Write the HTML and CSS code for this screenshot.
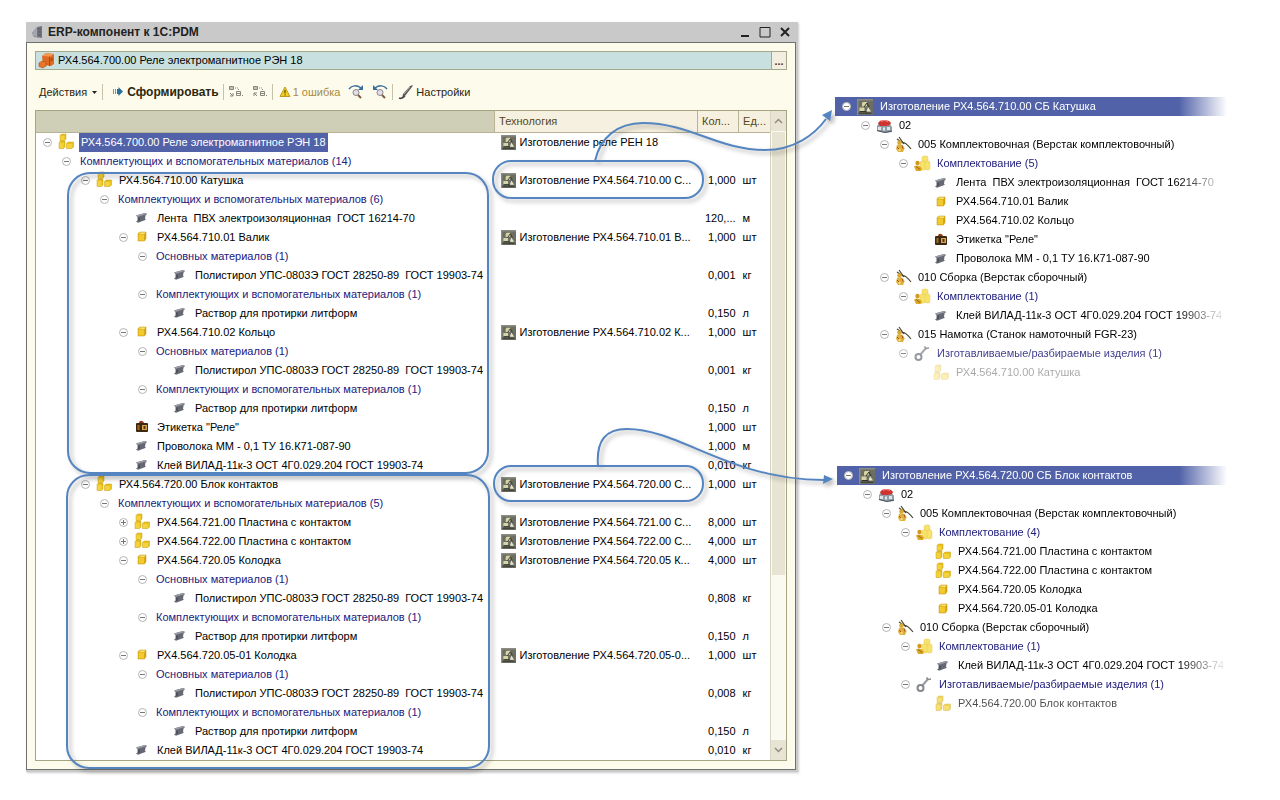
FILE: index.html
```html
<!DOCTYPE html>
<html lang="ru">
<head>
  <meta charset="UTF-8" />
  <meta name="viewport" content="width=device-width, initial-scale=1.0" />
  <title>ERP-компонент к 1С:PDM</title>
  <link rel="stylesheet" href="styles.css">
</head>
<body>
  <!-- Icon set -->
  <svg class="sprite" width="0" height="0" aria-hidden="true">
    <symbol id="minus" viewBox="0 0 9 9"><circle cx="4.500" cy="4.500" r="4" fill="#fff" stroke="#b4b4b4"/><path d="M2 4.500h5" stroke="#777"/></symbol>
    <symbol id="plus" viewBox="0 0 9 9"><circle cx="4.500" cy="4.500" r="4" fill="#fff" stroke="#b4b4b4"/><path d="M2 4.500h5M4.500 2v5" stroke="#777"/></symbol>
    <symbol id="asm" viewBox="0 0 18 18">
      <g fill="#e8c01f" stroke="#c9a014" stroke-width=".5"><path d="M3 2.500L4.500 1H9v5L7.500 7.500H3z"/><path d="M2 9.500L3.500 8H8v6l-1.500 1.500H2z"/><path d="M9.500 10.500L11 9h5.500v5L15 15.500H9.500z"/></g>
      <path d="M3.500 3h4v4h-4zM2.500 10h4v5h-4zM10 11h5v4h-5z" fill="#f3d23a"/>
    </symbol>
    <symbol id="part" viewBox="0 0 18 18"><path d="M5 5.500L7 4h6v6.500L11.500 13H5z" fill="#d9a915" stroke="#c1960f" stroke-width=".5"/><path d="M5.500 5.500L7.200 4.400h5.300L11.200 6z" fill="#fbeb85"/><path d="M5.500 6.500h5.500v6H5.500z" fill="#f2ca2e"/></symbol>
    <symbol id="bar" viewBox="0 0 18 18"><path d="M3 6.500l9-2.500 2 1-1.500 1.500-.5 3.500 1 .7-8 3-2-1.200 1.500-1V8z" fill="#666873"/><path d="M3 6.500l9-2.500 2 1-9 2.700z" fill="#9a9ca6"/><path d="M6 8.500v3.500" stroke="#383a45"/></symbol>
    <symbol id="label" viewBox="0 0 18 18"><rect x="3" y="5" width="12" height="9" rx="1" fill="#3d2812"/><path d="M6 5c0-3 4-3 5 0z" fill="#94391b"/><rect x="9" y="7" width="5" height="5" fill="#d9a653"/><rect x="4.500" y="7" width="2" height="5" fill="#9a6c28"/><path d="M10.500 8h2v3h-2z" fill="#5b3512"/></symbol>
    <symbol id="tech" viewBox="0 0 16 16"><rect width="16" height="16" fill="#6c6e63"/><path d="M0 0h16v1.500H0zM0 0h1.500v16H0z" fill="#8b8d83"/><path d="M5 4l1-1h4v3.500L9 7.500H5zM2.500 8.500h5v3.500h-5z" fill="#d6d4a4"/><path d="M9.500 12.500L11 8l3 4.500z" fill="#e9e7c9"/><path d="M7 8l3-4 2 4M3 12.500h6l1 1.500" stroke="#31332a" fill="none"/><path d="M1.500 13.500h13V15h-13z" fill="#44463c"/></symbol>
    <symbol id="shop" viewBox="0 0 18 18"><path d="M2 9l3-4 9 1 3 4v5l-7 1-8-2z" fill="#8f9da8"/><path d="M3 6.500C4 2 14 2 16 6l-1 2-4 1H5z" fill="#cf3430"/><path d="M6 4.500c2-1.500 5-1 7 0" stroke="#f2948b" fill="none"/><path d="M3 10h3v3H3zM8 10.500h2v3H8zM12 10h3v3h-3z" fill="#dfe6e6"/><path d="M2 13.500l8 2 7-1.500" stroke="#4a5459" fill="none"/></symbol>
    <symbol id="op" viewBox="0 0 18 18"><path d="M5 1l5 7M3 3l6 4M8 6c3 0 5 2 9 7" stroke="#4c4630" stroke-width="1.200" fill="none"/><circle cx="5.500" cy="6.500" r="2.300" fill="#d8a935"/><path d="M3 9c3-2 7 0 7.500 3.500L9 16H4l-2-3z" fill="#dfb03a"/><path d="M3 11l3 3M8 9.500l1 3" stroke="#a8501f"/><circle cx="5.500" cy="14" r="1.200" fill="#f3dc82"/></symbol>
    <symbol id="kit" viewBox="0 0 18 18"><g fill="#f7e26c" stroke="#e6c94c" stroke-width=".5"><rect x="9" y="1" width="6" height="6" rx="2"/><rect x="7" y="6" width="5.500" height="9" rx="2"/><rect x="12" y="6" width="5" height="9" rx="2"/></g><circle cx="4.500" cy="8" r="2.200" fill="#d29a20"/><path d="M1 11.500c3-2 6-1 8 2L8 16H3z" fill="#dca924"/><path d="M3 11.500l4 3" stroke="#a3661a"/></symbol>
    <symbol id="tool" viewBox="0 0 18 18"><path d="M7 10l6-7" stroke="#989ba0" stroke-width="2"/><circle cx="5.500" cy="12" r="3" fill="none" stroke="#85888d" stroke-width="2"/><path d="M11.500 1.500l1.500 2 3-.5" stroke="#85888d" fill="none" stroke-width="1.500"/></symbol>
  </svg>

  <div class="page">
    <main class="window">
      <header class="titlebar">
        <svg class="title-icon" viewBox="0 0 12 14"><path d="M1 8l5-6 5-1v12l-8-1z" fill="#74767f"/><path d="M1 8l5-6v10l-4-1z" fill="#a3a5b0"/><path d="M7 4h3M7 7h3M7 10h3" stroke="#55575f"/></svg>
        <h1>ERP-компонент к 1С:PDM</h1>
        <button class="win-btn" aria-label="Свернуть"><svg viewBox="0 0 12 12"><path d="M2 10h8" stroke="#222" stroke-width="2"/></svg></button>
        <button class="win-btn" aria-label="Развернуть"><svg viewBox="0 0 12 12"><path d="M1 1.500h10v9.500H1z" fill="none" stroke="#222"/></svg></button>
        <button class="win-btn" aria-label="Закрыть"><svg viewBox="0 0 12 12"><path d="M2 2l8 8M10 2l-8 8" stroke="#222" stroke-width="2"/></svg></button>
      </header>

      <div class="window-body">
        <div class="picker">
          <svg class="icon" viewBox="0 0 18 18"><path d="M4 4l4-3 8 1v10l-3 2-8-1z" fill="#e06a22"/><path d="M4 4l4-3 8 1-4 2.500z" fill="#f49a56"/><path d="M11.500 5v9" stroke="#a3460f"/><path d="M12.500 6.500l2.500-1v3l-2.500 1z" fill="#b84b10"/><path d="M1 11l3-2 4 1v4l-3 2-4-1.500z" fill="#e7752c" stroke="#b34b13" stroke-width=".6"/></svg>
          <input type="text" aria-label="Изделие" value="РХ4.564.700.00 Реле электромагнитное РЭН 18">
          <button aria-label="Выбрать">...</button>
        </div>

        <div class="toolbar">
          <button class="actions">Действия <svg width="5" height="3" viewBox="0 0 5 3"><path d="M0 0h5L2.500 3z" fill="#222"/></svg></button>
          <span class="sep"></span>
          <button class="run"><svg width="12" height="12" viewBox="0 0 12 12"><path d="M1.500 3v5M3.500 3v5" stroke="#5b9cc4"/><path d="M5 3h1.500V1L11 5.500 6.500 10V8H5z" fill="#2a6f9e"/></svg>Сформировать</button>
          <span class="sep"></span>
          <button class="tool" aria-label="Развернуть дерево"><svg width="16" height="16" viewBox="0 0 16 16"><g fill="none" stroke="#85877d"><path d="M1.500 2.500h4v3h-4zM8.500 7.500h4v4h-4zM8 9.500h5M1 4h5"/><path d="M7 4h1M9 4h1M10.500 5v1M14 11.500h1"/><path d="M2 9l3 3M5 9v3H2"/></g></svg></button>
          <button class="tool" aria-label="Свернуть дерево"><svg width="16" height="16" viewBox="0 0 16 16"><g fill="none" stroke="#85877d"><path d="M1.500 2.500h4v3h-4zM8.500 7.500h4v4h-4zM8 9.500h5M1 4h5"/><path d="M7 4h1M9 4h1M10.500 5v1M14 11.500h1"/><path d="M5 12L2 9M2 12V9h3"/></g></svg></button>
          <span class="sep"></span>
          <button class="warn"><svg width="12" height="12" viewBox="0 0 12 12"><path d="M6 1l5 9.500H1z" fill="#f3cb21" stroke="#c09a20"/><path d="M6 4v3.500M6 8.500v1" stroke="#39300a"/></svg>1 ошибка</button>
          <button class="tool" aria-label="Следующая ошибка"><svg width="16" height="16" viewBox="0 0 16 16"><path d="M1 5c3-4 8-4 12-1" fill="none" stroke="#386e9c" stroke-width="1.500"/><path d="M15 1v5h-5z" fill="#386e9c"/><circle cx="8" cy="8.500" r="3" fill="#e4dfe6" stroke="#8c8790"/><path d="M10 11l3 3" stroke="#805c3b" stroke-width="2"/></svg></button>
          <button class="tool" aria-label="Предыдущая ошибка"><svg width="16" height="16" viewBox="0 0 16 16"><path d="M15 5c-3-4-8-4-12-1" fill="none" stroke="#386e9c" stroke-width="1.500"/><path d="M1 1v5h5z" fill="#386e9c"/><circle cx="8" cy="8.500" r="3" fill="#e4dfe6" stroke="#8c8790"/><path d="M10 11l3 3" stroke="#805c3b" stroke-width="2"/></svg></button>
          <span class="sep"></span>
          <button class="settings"><svg width="16" height="16" viewBox="0 0 16 16"><path d="M4 14l1-4 7-8 3-1-1 2-7 9z" fill="#5a5b60"/><path d="M1 14c2 1 4 0 6-2" fill="none" stroke="#444" stroke-width="1.500"/><path d="M6 10l6-7" stroke="#aaa"/></svg>Настройки</button>
        </div>

        <div class="grid">
          <table>
            <colgroup><col><col class="col-tech"><col class="col-qty"><col class="col-unit"></colgroup>
            <thead>
              <tr><th class="th-tree" aria-label="Изделие"></th><th>Технология</th><th>Кол...</th><th>Ед...</th></tr>
            </thead>
            <tbody>
              <tr><td><div class="node l0"><button class="tg"><svg><use href="#minus"/></svg></button><svg class="icon"><use href="#asm"/></svg><span class="selected">РХ4.564.700.00 Реле электромагнитное РЭН 18</span></div></td><td><div class="tech"><svg><use href="#tech"/></svg>Изготовление реле РЕН 18</div></td><td></td><td></td></tr>
              <tr><td><div class="node l1 group"><button class="tg"><svg><use href="#minus"/></svg></button><span>Комплектующих и вспомогательных материалов (14)</span></div></td><td></td><td></td><td></td></tr>
              <tr><td><div class="node l2"><button class="tg"><svg><use href="#minus"/></svg></button><svg class="icon"><use href="#asm"/></svg><span>РХ4.564.710.00 Катушка</span></div></td><td><div class="tech"><svg><use href="#tech"/></svg>Изготовление РХ4.564.710.00 С...</div></td><td>1,000</td><td>шт</td></tr>
              <tr><td><div class="node l3 group"><button class="tg"><svg><use href="#minus"/></svg></button><span>Комплектующих и вспомогательных материалов (6)</span></div></td><td></td><td></td><td></td></tr>
              <tr><td><div class="node l4 leaf"><svg class="icon"><use href="#bar"/></svg><span>Лента&nbsp; ПВХ электроизоляционная&nbsp; ГОСТ 16214-70</span></div></td><td></td><td>120,...</td><td>м</td></tr>
              <tr><td><div class="node l4"><button class="tg"><svg><use href="#minus"/></svg></button><svg class="icon"><use href="#part"/></svg><span>РХ4.564.710.01 Валик</span></div></td><td><div class="tech"><svg><use href="#tech"/></svg>Изготовление РХ4.564.710.01 В...</div></td><td>1,000</td><td>шт</td></tr>
              <tr><td><div class="node l5 group"><button class="tg"><svg><use href="#minus"/></svg></button><span>Основных материалов (1)</span></div></td><td></td><td></td><td></td></tr>
              <tr><td><div class="node l6 leaf"><svg class="icon"><use href="#bar"/></svg><span>Полистирол УПС-0803Э ГОСТ 28250-89&nbsp; ГОСТ 19903-74</span></div></td><td></td><td>0,001</td><td>кг</td></tr>
              <tr><td><div class="node l5 group"><button class="tg"><svg><use href="#minus"/></svg></button><span>Комплектующих и вспомогательных материалов (1)</span></div></td><td></td><td></td><td></td></tr>
              <tr><td><div class="node l6 leaf"><svg class="icon"><use href="#bar"/></svg><span>Раствор для протирки литформ</span></div></td><td></td><td>0,150</td><td>л</td></tr>
              <tr><td><div class="node l4"><button class="tg"><svg><use href="#minus"/></svg></button><svg class="icon"><use href="#part"/></svg><span>РХ4.564.710.02 Кольцо</span></div></td><td><div class="tech"><svg><use href="#tech"/></svg>Изготовление РХ4.564.710.02 К...</div></td><td>1,000</td><td>шт</td></tr>
              <tr><td><div class="node l5 group"><button class="tg"><svg><use href="#minus"/></svg></button><span>Основных материалов (1)</span></div></td><td></td><td></td><td></td></tr>
              <tr><td><div class="node l6 leaf"><svg class="icon"><use href="#bar"/></svg><span>Полистирол УПС-0803Э ГОСТ 28250-89&nbsp; ГОСТ 19903-74</span></div></td><td></td><td>0,001</td><td>кг</td></tr>
              <tr><td><div class="node l5 group"><button class="tg"><svg><use href="#minus"/></svg></button><span>Комплектующих и вспомогательных материалов (1)</span></div></td><td></td><td></td><td></td></tr>
              <tr><td><div class="node l6 leaf"><svg class="icon"><use href="#bar"/></svg><span>Раствор для протирки литформ</span></div></td><td></td><td>0,150</td><td>л</td></tr>
              <tr><td><div class="node l4 leaf"><svg class="icon"><use href="#label"/></svg><span>Этикетка "Реле"</span></div></td><td></td><td>1,000</td><td>шт</td></tr>
              <tr><td><div class="node l4 leaf"><svg class="icon"><use href="#bar"/></svg><span>Проволока ММ - 0,1 ТУ 16.К71-087-90</span></div></td><td></td><td>1,000</td><td>м</td></tr>
              <tr><td><div class="node l4 leaf"><svg class="icon"><use href="#bar"/></svg><span>Клей ВИЛАД-11к-3 ОСТ 4Г0.029.204 ГОСТ 19903-74</span></div></td><td></td><td>0,010</td><td>кг</td></tr>
              <tr><td><div class="node l2"><button class="tg"><svg><use href="#minus"/></svg></button><svg class="icon"><use href="#asm"/></svg><span>РХ4.564.720.00 Блок контактов</span></div></td><td><div class="tech"><svg><use href="#tech"/></svg>Изготовление РХ4.564.720.00 С...</div></td><td>1,000</td><td>шт</td></tr>
              <tr><td><div class="node l3 group"><button class="tg"><svg><use href="#minus"/></svg></button><span>Комплектующих и вспомогательных материалов (5)</span></div></td><td></td><td></td><td></td></tr>
              <tr><td><div class="node l4"><button class="tg"><svg><use href="#plus"/></svg></button><svg class="icon"><use href="#asm"/></svg><span>РХ4.564.721.00 Пластина с контактом</span></div></td><td><div class="tech"><svg><use href="#tech"/></svg>Изготовление РХ4.564.721.00 С...</div></td><td>8,000</td><td>шт</td></tr>
              <tr><td><div class="node l4"><button class="tg"><svg><use href="#plus"/></svg></button><svg class="icon"><use href="#asm"/></svg><span>РХ4.564.722.00 Пластина с контактом</span></div></td><td><div class="tech"><svg><use href="#tech"/></svg>Изготовление РХ4.564.722.00 С...</div></td><td>4,000</td><td>шт</td></tr>
              <tr><td><div class="node l4"><button class="tg"><svg><use href="#minus"/></svg></button><svg class="icon"><use href="#part"/></svg><span>РХ4.564.720.05 Колодка</span></div></td><td><div class="tech"><svg><use href="#tech"/></svg>Изготовление РХ4.564.720.05 К...</div></td><td>4,000</td><td>шт</td></tr>
              <tr><td><div class="node l5 group"><button class="tg"><svg><use href="#minus"/></svg></button><span>Основных материалов (1)</span></div></td><td></td><td></td><td></td></tr>
              <tr><td><div class="node l6 leaf"><svg class="icon"><use href="#bar"/></svg><span>Полистирол УПС-0803Э ГОСТ 28250-89&nbsp; ГОСТ 19903-74</span></div></td><td></td><td>0,808</td><td>кг</td></tr>
              <tr><td><div class="node l5 group"><button class="tg"><svg><use href="#minus"/></svg></button><span>Комплектующих и вспомогательных материалов (1)</span></div></td><td></td><td></td><td></td></tr>
              <tr><td><div class="node l6 leaf"><svg class="icon"><use href="#bar"/></svg><span>Раствор для протирки литформ</span></div></td><td></td><td>0,150</td><td>л</td></tr>
              <tr><td><div class="node l4"><button class="tg"><svg><use href="#minus"/></svg></button><svg class="icon"><use href="#part"/></svg><span>РХ4.564.720.05-01 Колодка</span></div></td><td><div class="tech"><svg><use href="#tech"/></svg>Изготовление РХ4.564.720.05-0...</div></td><td>1,000</td><td>шт</td></tr>
              <tr><td><div class="node l5 group"><button class="tg"><svg><use href="#minus"/></svg></button><span>Основных материалов (1)</span></div></td><td></td><td></td><td></td></tr>
              <tr><td><div class="node l6 leaf"><svg class="icon"><use href="#bar"/></svg><span>Полистирол УПС-0803Э ГОСТ 28250-89&nbsp; ГОСТ 19903-74</span></div></td><td></td><td>0,008</td><td>кг</td></tr>
              <tr><td><div class="node l5 group"><button class="tg"><svg><use href="#minus"/></svg></button><span>Комплектующих и вспомогательных материалов (1)</span></div></td><td></td><td></td><td></td></tr>
              <tr><td><div class="node l6 leaf"><svg class="icon"><use href="#bar"/></svg><span>Раствор для протирки литформ</span></div></td><td></td><td>0,150</td><td>л</td></tr>
              <tr><td><div class="node l4 leaf"><svg class="icon"><use href="#bar"/></svg><span>Клей ВИЛАД-11к-3 ОСТ 4Г0.029.204 ГОСТ 19903-74</span></div></td><td></td><td>0,010</td><td>кг</td></tr>
            </tbody>
          </table>
          <div class="scrollbar">
            <button aria-label="Вверх"><svg viewBox="0 0 9 6"><path d="M1 5l3.500-3.500L8 5" fill="none" stroke="#8f8d80" stroke-width="1.500"/></svg></button>
            <div class="track"><div class="thumb"></div></div>
            <button aria-label="Вниз"><svg viewBox="0 0 9 6"><path d="M1 1l3.500 3.500L8 1" fill="none" stroke="#8f8d80" stroke-width="1.500"/></svg></button>
          </div>
        </div>
      </div>
    </main>

    <aside class="details">
      <ul class="panel">
        <li class="node l0 head"><button class="tg"><svg><use href="#minus"/></svg></button><svg class="icon"><use href="#tech"/></svg><span>Изготовление РХ4.564.710.00 СБ Катушка</span></li>
        <li class="node l1"><button class="tg"><svg><use href="#minus"/></svg></button><svg class="icon"><use href="#shop"/></svg><span>02</span></li>
        <li class="node l2"><button class="tg"><svg><use href="#minus"/></svg></button><svg class="icon"><use href="#op"/></svg><span>005 Комплектовочная (Верстак комплектовочный)</span></li>
        <li class="node l3 blue"><button class="tg"><svg><use href="#minus"/></svg></button><svg class="icon"><use href="#kit"/></svg><span>Комплектование (5)</span></li>
        <li class="node l4 leaf"><svg class="icon"><use href="#bar"/></svg><span>Лента&nbsp; ПВХ электроизоляционная&nbsp; ГОСТ 16214-70</span></li>
        <li class="node l4 leaf"><svg class="icon"><use href="#part"/></svg><span>РХ4.564.710.01 Валик</span></li>
        <li class="node l4 leaf"><svg class="icon"><use href="#part"/></svg><span>РХ4.564.710.02 Кольцо</span></li>
        <li class="node l4 leaf"><svg class="icon"><use href="#label"/></svg><span>Этикетка "Реле"</span></li>
        <li class="node l4 leaf"><svg class="icon"><use href="#bar"/></svg><span>Проволока ММ - 0,1 ТУ 16.К71-087-90</span></li>
        <li class="node l2"><button class="tg"><svg><use href="#minus"/></svg></button><svg class="icon"><use href="#op"/></svg><span>010 Сборка (Верстак сборочный)</span></li>
        <li class="node l3 blue"><button class="tg"><svg><use href="#minus"/></svg></button><svg class="icon"><use href="#kit"/></svg><span>Комплектование (1)</span></li>
        <li class="node l4 leaf"><svg class="icon"><use href="#bar"/></svg><span>Клей ВИЛАД-11к-3 ОСТ 4Г0.029.204 ГОСТ 19903-74</span></li>
        <li class="node l2"><button class="tg"><svg><use href="#minus"/></svg></button><svg class="icon"><use href="#op"/></svg><span>015 Намотка (Станок намоточный FGR-23)</span></li>
        <li class="node l3 blue fade-1"><button class="tg"><svg><use href="#minus"/></svg></button><svg class="icon"><use href="#tool"/></svg><span>Изготавливаемые/разбираемые изделия (1)</span></li>
        <li class="node l4 leaf fade-3"><svg class="icon"><use href="#asm"/></svg><span>РХ4.564.710.00 Катушка</span></li>
      </ul>
      <ul class="panel panel-second">
        <li class="node l0 head"><button class="tg"><svg><use href="#minus"/></svg></button><svg class="icon"><use href="#tech"/></svg><span>Изготовление РХ4.564.720.00 СБ Блок контактов</span></li>
        <li class="node l1"><button class="tg"><svg><use href="#minus"/></svg></button><svg class="icon"><use href="#shop"/></svg><span>02</span></li>
        <li class="node l2"><button class="tg"><svg><use href="#minus"/></svg></button><svg class="icon"><use href="#op"/></svg><span>005 Комплектовочная (Верстак комплектовочный)</span></li>
        <li class="node l3 blue"><button class="tg"><svg><use href="#minus"/></svg></button><svg class="icon"><use href="#kit"/></svg><span>Комплектование (4)</span></li>
        <li class="node l4 leaf"><svg class="icon"><use href="#asm"/></svg><span>РХ4.564.721.00 Пластина с контактом</span></li>
        <li class="node l4 leaf"><svg class="icon"><use href="#asm"/></svg><span>РХ4.564.722.00 Пластина с контактом</span></li>
        <li class="node l4 leaf"><svg class="icon"><use href="#part"/></svg><span>РХ4.564.720.05 Колодка</span></li>
        <li class="node l4 leaf"><svg class="icon"><use href="#part"/></svg><span>РХ4.564.720.05-01 Колодка</span></li>
        <li class="node l2"><button class="tg"><svg><use href="#minus"/></svg></button><svg class="icon"><use href="#op"/></svg><span>010 Сборка (Верстак сборочный)</span></li>
        <li class="node l3 blue"><button class="tg"><svg><use href="#minus"/></svg></button><svg class="icon"><use href="#kit"/></svg><span>Комплектование (1)</span></li>
        <li class="node l4 leaf"><svg class="icon"><use href="#bar"/></svg><span>Клей ВИЛАД-11к-3 ОСТ 4Г0.029.204 ГОСТ 19903-74</span></li>
        <li class="node l3 blue"><button class="tg"><svg><use href="#minus"/></svg></button><svg class="icon"><use href="#tool"/></svg><span>Изготавливаемые/разбираемые изделия (1)</span></li>
        <li class="node l4 leaf fade-2"><svg class="icon"><use href="#asm"/></svg><span>РХ4.564.720.00 Блок контактов</span></li>
      </ul>
    </aside>

    <!-- Frames and arrows drawn over the tree -->
    <svg class="callouts" width="1280" height="800" viewBox="0 0 1280 800" aria-hidden="true">
      <g fill="none" stroke="#5585c0" stroke-width="2">
        <rect x="68" y="173" width="420" height="300" rx="22"/>
        <rect x="67" y="475" width="422" height="293" rx="22"/>
        <rect x="493" y="161" width="210" height="37" rx="18"/>
        <rect x="494" y="466" width="209" height="35" rx="17"/>
        <path d="M595 161C600 138 617 123 643 123C690 123 718 150 765 150C795 150 815 134 826 119"/>
        <path d="M598 466C596 440 606 429 627 429C680 429 730 480 824 480"/>
      </g>
      <path d="M832 110l-2 11-8-6zM833 479l-10 5 1-9z" fill="#5585c0"/>
    </svg>
  </div>
</body>
</html>
```

FILE: styles.css
```css
* {
  margin: 0;
  padding: 0;
  box-sizing: border-box;
}

body {
  font-family: "Liberation Sans", Arial, sans-serif;
  font-size: 11px;
  line-height: 19px;
  color: #000;
  background-color: #fff;
}

button, input {
  font: inherit;
  color: inherit;
  background: none;
  border: none;
}

.sprite {
  position: absolute;
}

.page {
  position: relative;
  display: grid;
  grid-template-columns: minmax(0, 772fr) minmax(0, 400fr);
  gap: 37px;
  align-items: start;
  padding: 22px 45px 28px 26px;
}

/* Main window */
.window {
  background-color: #fcfbec;
  border: solid #c9c9c9;
  border-width: 0 2px 2px 0;
  box-shadow: 1px 1px 2px rgba(0, 0, 0, 0.2);
}

.titlebar {
  display: flex;
  align-items: center;
  gap: 8px;
  height: 20px;
  padding: 0 7px 0 5px;
  margin-right: -2px;
  background-color: #c9c9c9;
}

.title-icon {
  width: 12px;
  height: 14px;
  margin-right: -3px;
}

.titlebar h1 {
  flex: 1;
  font-size: 12px;
  font-weight: bold;
  color: #222;
}

.win-btn {
  display: flex;
  width: 12px;
  height: 12px;
}

.window-body {
  padding: 8px;
  border: 1px solid #707070;
}

.picker {
  display: flex;
  align-items: center;
  height: 19px;
  background-color: #c8e0df;
  border: 1px solid #a5a98c;
}

.picker .icon {
  margin: 0 2px;
}

.picker input {
  flex: 1;
  min-width: 0;
  height: 17px;
  outline: none;
}

.picker button {
  width: 15px;
  height: 17px;
  line-height: 14px;
  font-weight: bold;
  color: #5e301e;
  background-color: #f3eee0;
  border-left: 1px solid #a5a98c;
}

.toolbar {
  display: flex;
  align-items: center;
  height: 40px;
  padding: 4px 4px 0;
  color: #2d260e;
}

.toolbar button {
  display: flex;
  align-items: center;
  white-space: nowrap;
}

.sep {
  width: 1px;
  height: 16px;
  background-color: #c6c2ab;
}

.actions {
  gap: 5px;
  margin-right: 5px;
}

.run {
  gap: 3px;
  margin-left: 9px;
  margin-right: 4px;
  font-size: 12px;
  font-weight: bold;
}

.tool {
  width: 24px;
  justify-content: center;
}

.warn {
  gap: 2px;
  margin-left: 6px;
  margin-right: 4px;
  color: #a98a3c;
}

.settings {
  gap: 2px;
  margin-left: 5px;
}

/* Tree table */
.grid {
  display: flex;
  background-color: #fff;
  border: 1px solid #a5a582;
}

table {
  flex: 1;
  min-width: 0;
  table-layout: fixed;
  border-collapse: collapse;
}

.col-tech {
  width: 203px;
}

.col-qty {
  width: 41px;
}

.col-unit {
  width: 31px;
}

th {
  height: 21px;
  padding: 0 4px;
  font-weight: normal;
  text-align: left;
  color: #554719;
  background-color: #f5f0df;
  border-left: 1px solid #b7b394;
  border-bottom: 1px solid #b7b394;
}

.th-tree {
  background-color: #cfceb7;
  border-left: none;
}

td {
  height: 19px;
  white-space: nowrap;
}

td:nth-child(3) {
  padding-right: 3px;
  text-align: right;
}

td:nth-child(4) {
  padding-left: 4px;
}

.node {
  display: flex;
  align-items: center;
  height: 19px;
  padding-left: 7px;
  white-space: nowrap;
}

.l1 { padding-left: 26px; }
.l2 { padding-left: 45px; }
.l3 { padding-left: 64px; }
.l4 { padding-left: 83px; }
.l5 { padding-left: 102px; }
.l6 { padding-left: 121px; }

.tg {
  display: flex;
  flex: none;
  width: 9px;
  margin-right: 5px;
}

.tg svg {
  width: 9px;
  height: 9px;
}

.icon {
  flex: none;
  width: 18px;
  height: 18px;
}

.node .icon {
  margin-right: 6px;
}

.leaf .icon {
  margin-left: 14px;
}

.group span {
  margin-left: 4px;
}

.group, .blue {
  color: #23207c;
}

.node .selected {
  padding: 0 2px;
  margin-left: -2px;
  color: #fff;
  background-color: #5262a8;
}

.tech {
  display: flex;
  align-items: center;
  gap: 4px;
  padding-left: 6px;
}

.tech svg {
  width: 15px;
  height: 15px;
}

.scrollbar {
  display: flex;
  flex-direction: column;
  width: 16px;
  background-color: #fbfaf0;
  border-left: 1px solid #d8d5c2;
}

.scrollbar button {
  display: flex;
  align-items: center;
  justify-content: center;
  height: 20px;
  background-color: #e8e4d3;
}

.scrollbar svg {
  width: 9px;
  height: 6px;
}

.track {
  flex: 1;
  padding: 1px 1px 0;
}

.thumb {
  height: 73%;
  background-color: #e8e4d3;
}

/* Technology panels on the right */
.details {
  display: flex;
  flex-direction: column;
  gap: 84px;
  padding-top: 75px;
}

.panel {
  list-style: none;
  overflow: hidden;
  mask-image: linear-gradient(to right, #000 86%, transparent 98%);
}

.panel-second {
  margin-left: 2px;
}

.head {
  color: #fff;
  background-color: #5262a8;
}

.head .icon {
  width: 16px;
  height: 16px;
  margin-left: 1px;
  margin-right: 7px;
}

.fade-1 { opacity: 0.85; }
.fade-2 { opacity: 0.7; }
.fade-3 { opacity: 0.35; }

.callouts {
  position: absolute;
  top: 0;
  left: 0;
  pointer-events: none;
  filter: drop-shadow(3px 3px 2px rgba(0, 0, 0, 0.3));
}
```
